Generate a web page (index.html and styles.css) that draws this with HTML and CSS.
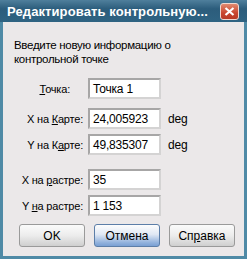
FILE: index.html
```html
<!DOCTYPE html>
<html lang="ru">
<head>
<meta charset="UTF-8">
<title>Редактировать контрольную точку</title>
<link rel="stylesheet" href="styles.css">
</head>
<body>

<div class="window">
  <div class="titlebar">
    <span class="title">Редактировать контрольную...</span>
    <span class="close-btn">
      <svg width="11" height="9" viewBox="0 0 11 9"><path d="M1.5 1 L9.5 8 M9.5 1 L1.5 8" stroke="#fff" stroke-width="2.2"/></svg>
    </span>
  </div>

  <div class="content">
    <p class="intro">Введите новую информацию о<br>контрольной точке</p>

    <div class="row row-point">
      <label class="lbl lbl-point"><u>Т</u>очка:</label>
      <div class="field">Точка 1</div>
    </div>
    <div class="row row-mapx">
      <label class="lbl">X на <u>К</u>арте:</label>
      <div class="field">24,005923</div>
      <span class="unit">deg</span>
    </div>
    <div class="row row-mapy">
      <label class="lbl">Y на К<u>а</u>рте:</label>
      <div class="field">49,835307</div>
      <span class="unit">deg</span>
    </div>
    <div class="row row-rasx">
      <label class="lbl">X на <u>р</u>астре:</label>
      <div class="field">35</div>
    </div>
    <div class="row row-rasy">
      <label class="lbl">Y <u>н</u>а растре:</label>
      <div class="field">1 153</div>
    </div>

    <div class="buttons">
      <button class="btn">OK</button>
      <button class="btn btn-focus">Отмена</button>
      <button class="btn">Сп<u>р</u>авка</button>
    </div>
  </div>
</div>

</body>
</html>
```

FILE: styles.css
```css
body {
  margin: 0;
  background: #fff;
  font-family: "Liberation Sans", Arial, sans-serif;
  font-size: 11px;
  letter-spacing: -0.2px;
  color: #000;
}

.window {
  width: 247px;
  height: 259px;
  box-sizing: border-box;
  background: #ebe8e9;
  border: 3px solid #4f8aa6;
  border-top: none;
  display: flex;
  flex-direction: column;
}

.titlebar {
  height: 22px;
  margin: 0 -3px;
  background: linear-gradient(#4f7f9c, #2c5d7c 40%, #2f6382);
  display: flex;
  align-items: center;
  justify-content: space-between;
  padding: 0 8px 0 7px;
}

.title {
  color: #fff;
  font-weight: bold;
  font-size: 13px;
  letter-spacing: 0.1px;
}

.close-btn {
  width: 19px;
  height: 17px;
  box-sizing: border-box;
  border: 1px solid #f0d8d0;
  border-radius: 3px;
  background: linear-gradient(#e08a70, #c9452e 60%, #b83a26);
  display: flex;
  align-items: center;
  justify-content: center;
}

.content {
  padding: 16px 0 0 11px;
}

.intro {
  margin: 0 0 12px;
  line-height: 14px;
  font-size: 11.5px;
  letter-spacing: -0.3px;
}

.row {
  display: flex;
  align-items: center;
  height: 21px;
  white-space: nowrap;
}

.row-point { margin-top: 0; }
.row-mapx { margin-top: 9px; }
.row-mapy { margin-top: 5px; }
.row-rasx { margin-top: 14px; }
.row-rasy { margin-top: 5px; }

.lbl {
  width: 69px;
  text-align: right;
  margin-right: 5px;
}

.lbl-point {
  width: 56px;
  margin-right: 18px;
}

.field {
  width: 73px;
  height: 21px;
  box-sizing: border-box;
  border: 2px solid #a7a6a6;
  border-right-color: #d4d3d3;
  border-bottom-color: #d4d3d3;
  background: #fff;
  padding: 2px 3px 0;
  line-height: 15px;
  font-size: 12px;
}

.unit {
  margin-left: 7px;
  font-size: 12px;
}

.buttons {
  display: flex;
  gap: 9px;
  margin-top: 8px;
  padding-left: 5px;
}

.btn {
  width: 66px;
  height: 23px;
  font-family: inherit;
  font-size: 12px;
  color: #000;
  border: 1px solid #9a9a9a;
  border-radius: 3px;
  background: linear-gradient(#fbfbfb, #ececec 50%, #cfcfcf);
  padding: 0;
}

.btn-focus {
  border-color: #5c7ea8;
  background: linear-gradient(#fdfdfd, #e0e8f4 45%, #8fb0dc 85%, #7aa0d4);
}
```
